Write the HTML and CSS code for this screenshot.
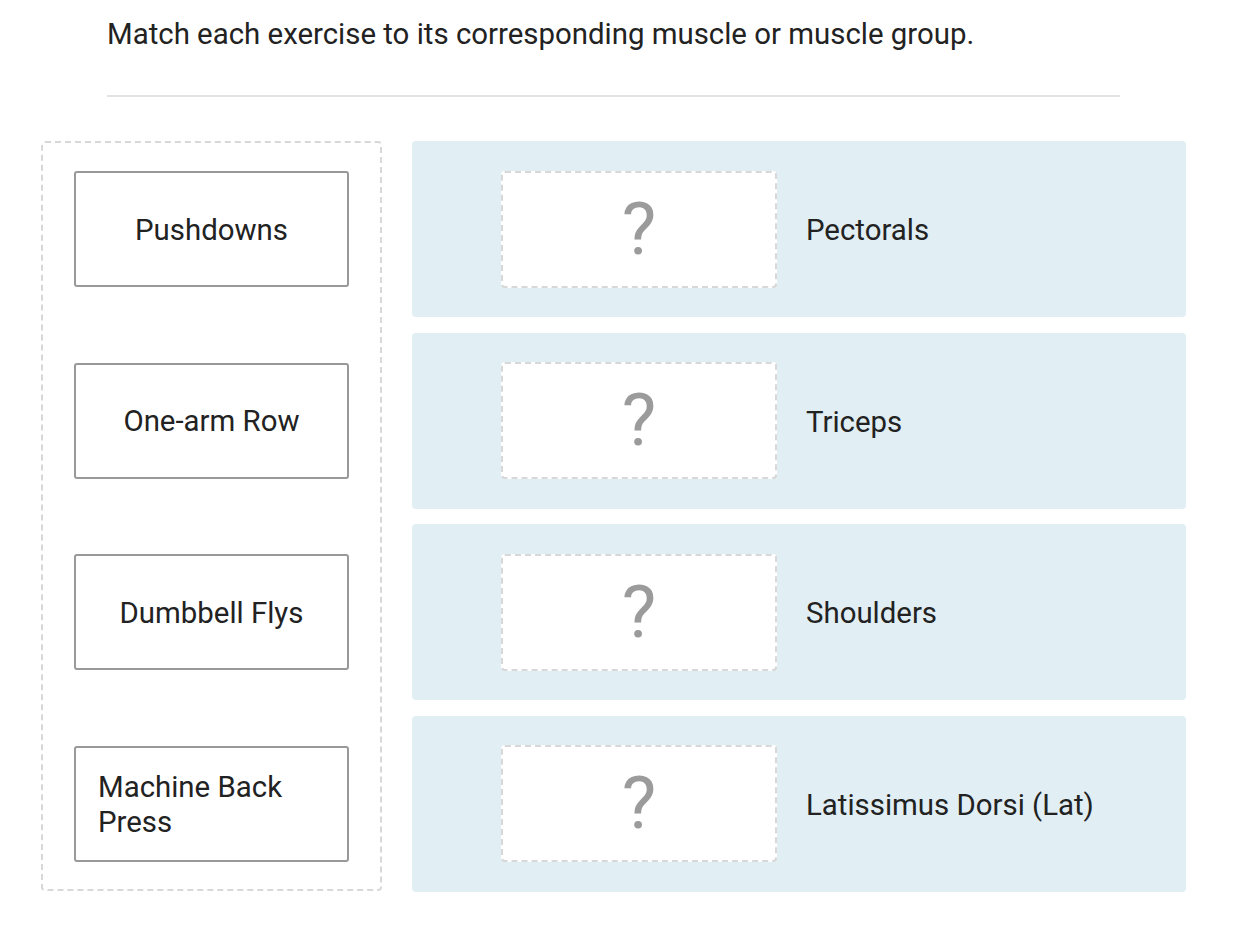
FILE: index.html
```html
<!DOCTYPE html>
<html lang="en">
<head>
<meta charset="utf-8">
<title>Match exercises</title>
<link rel="stylesheet" href="styles.css">
</head>
<body>
<div class="page">
  <div class="header">
    <p class="prompt">Match each exercise to its corresponding muscle or muscle group.</p>
    <hr class="divider">
  </div>
  <div class="board">
    <div class="pool">
      <div class="item"><span>Pushdowns</span></div>
      <div class="item"><span>One-arm Row</span></div>
      <div class="item"><span>Dumbbell Flys</span></div>
      <div class="item"><span>Machine Back Press</span></div>
    </div>
    <div class="targets">
      <div class="row"><div class="drop">?</div><div class="label">Pectorals</div></div>
      <div class="row"><div class="drop">?</div><div class="label">Triceps</div></div>
      <div class="row"><div class="drop">?</div><div class="label">Shoulders</div></div>
      <div class="row"><div class="drop">?</div><div class="label">Latissimus Dorsi (Lat)</div></div>
    </div>
  </div>
</div>
</body>
</html>
```

FILE: styles.css
```css
* { box-sizing: border-box; }
html, body { margin: 0; padding: 0; background: #fff; }
body {
  font-family: Roboto, "Liberation Sans", Arial, sans-serif;
  color: #222;
}
.page {
  padding: 0 48px 0 41px;
}
.header {
  padding: 14px 66px 0 66px;
}
.prompt {
  margin: 0;
  font-size: 29.4px;
  line-height: 40px;
}
.divider {
  margin: 41px 0 0 0;
  border: 0;
  border-top: 2px solid #e3e3e3;
  height: 0;
}
.board {
  display: flex;
  gap: 30px;
  margin-top: 44px;
  align-items: flex-start;
}
.pool {
  width: 341px;
  flex: none;
  border: 2px dashed #d8d8d8;
  border-radius: 4px;
  padding: 28px 31px 27px 31px;
  display: flex;
  flex-direction: column;
  gap: 75.5px;
}
.item {
  height: 116px;
  width: 275px;
  border: 2px solid #999;
  border-radius: 3px;
  background: #fff;
  display: flex;
  align-items: center;
  justify-content: center;
  padding: 2px 22px 0 22px;
  font-size: 29.4px;
  line-height: 35px;
}
.targets {
  flex: 1;
  display: flex;
  flex-direction: column;
  gap: 15.5px;
}
.row {
  height: 176px;
  background: #e1eef3;
  border-radius: 4px;
  display: flex;
  align-items: center;
  padding-left: 89px;
}
.drop {
  width: 276px;
  height: 117px;
  background: #fff;
  border: 2px dashed #d8d8d8;
  border-radius: 4px;
  display: flex;
  align-items: center;
  justify-content: center;
  color: #9b9b9b;
  font-size: 73px;
  line-height: 1;
}
.label {
  margin-left: 29px;
  padding-top: 2px;
  font-size: 29.4px;
}
```
